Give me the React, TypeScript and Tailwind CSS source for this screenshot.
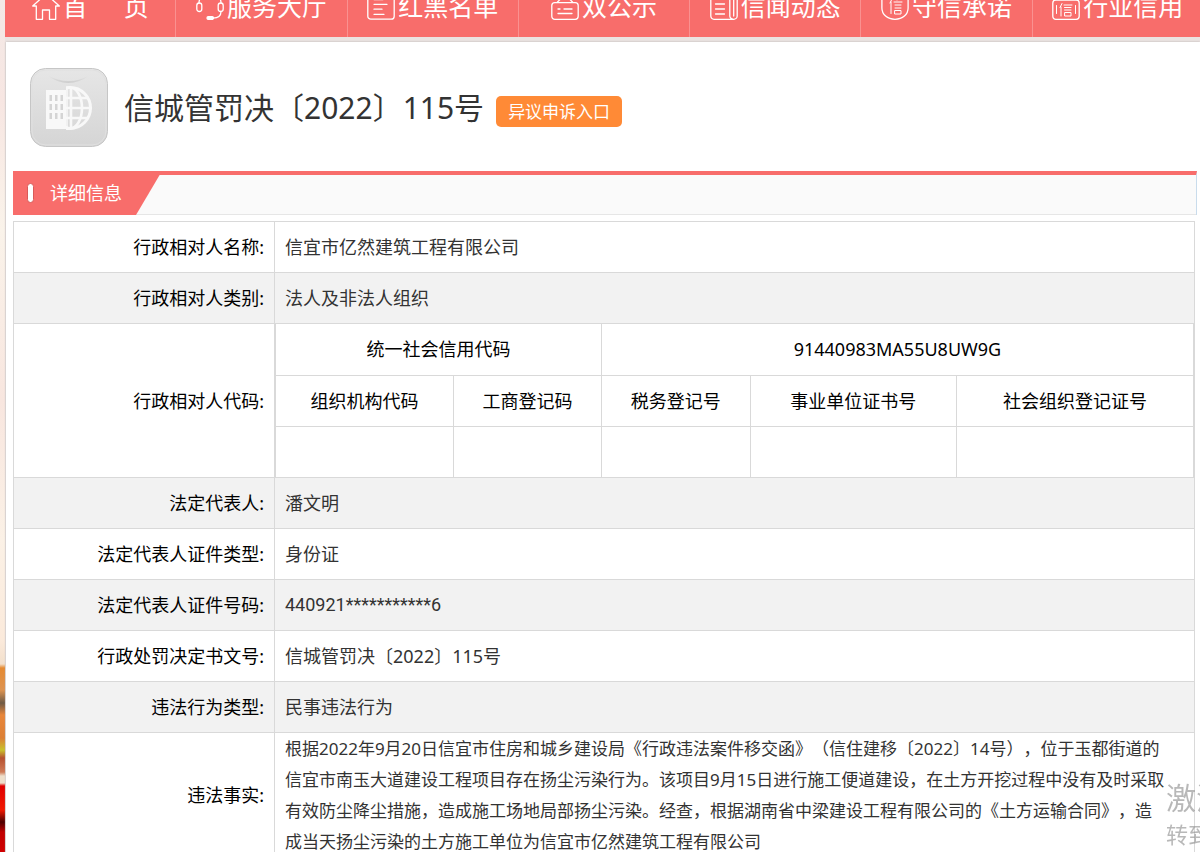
import React from 'react';

interface NavEntry {
  label: string[];
  icon: React.ReactNode;
}

interface DetailRow {
  label: string;
  value: string;
  masked?: boolean;
}

const NavIcon: React.FC<{ children: React.ReactNode }> = ({ children }) => (
  <svg
    className="w-7 h-7 shrink-0"
    viewBox="0 0 28 28"
    fill="none"
    stroke="currentColor"
    strokeWidth="1.3"
    strokeLinecap="round"
    strokeLinejoin="round"
    aria-hidden="true"
  >
    {children}
  </svg>
);

const HomeIcon = () => (
  <NavIcon>
    <path d="M.7 14 14 2l13.3 12h-3.6v13.3h-6.2V18h-7v9.3H4.3V14z" />
  </NavIcon>
);

const HeadsetIcon = () => (
  <NavIcon>
    <path d="M3 11C3 5 8 1 14 1s11 4 11 10" />
    <rect x=".8" y="11" width="5" height="8.5" rx="2.5" />
    <rect x="22.2" y="11" width="5" height="8.5" rx="2.5" />
    <path d="M25 19.5c0 4-3 6.500-8 6.700" />
    <rect x="11" y="24.6" width="6.5" height="2.8" rx="1.4" fill="currentColor" />
  </NavIcon>
);

const ListIcon = () => (
  <NavIcon>
    <rect x=".8" y="2" width="26.4" height="25.2" rx="3" />
    <path d="M7 7.5h9M7 12.3h13M7 17.2h8M7 22.3h10" />
  </NavIcon>
);

const BoardIcon = () => (
  <NavIcon>
    <rect x=".8" y="10.6" width="26.4" height="16.7" rx="3" />
    <path d="m6.500 10 3-3h9l3 3M10 7a4 4 0 0 1 8 0M7 17h2M13 17h8M7 21.500h14" />
  </NavIcon>
);

const NewsIcon = () => (
  <NavIcon>
    <path d="M24 27.300H4a3.200 3.200 0 0 1-3.200-3.200V2h19v22a3.700 3.300 0 0 0 7.400 0V5h-3.500v19" />
    <path d="M5.500 7h9M5.500 12h9M5.500 17h9M5.500 22h9" />
  </NavIcon>
);

const ShieldIcon = () => (
  <NavIcon>
    <path d="M14 1 .9 4v12c0 6.500 5.500 11.300 13.100 11.300S27.100 22.500 27.100 16V4z" />
    <path d="M11.500 6 9 11M10 10v11.500M16 7v1M13 10h8M14 13h6M14 16h6M14 18.500h6v3.500h-6z" strokeWidth="1" />
  </NavIcon>
);

const BadgeIcon = () => (
  <NavIcon>
    <rect x=".8" y="8" width="26.400" height="19.300" rx="3" />
    <path d="M4.500 13.500v8M23.500 13.500v8M10 11.500l-2 4M9 15v9M12 13h8M12.500 15.500h6.500M12.500 18h6.500M13 20.500h6V24h-6z" strokeWidth="1" />
  </NavIcon>
);

const navEntries: NavEntry[] = [
  { label: ['首', '页'], icon: <HomeIcon /> },
  { label: ['服务大厅'], icon: <HeadsetIcon /> },
  { label: ['红黑名单'], icon: <ListIcon /> },
  { label: ['双公示'], icon: <BoardIcon /> },
  { label: ['信闻动态'], icon: <NewsIcon /> },
  { label: ['守信承诺'], icon: <ShieldIcon /> },
  { label: ['行业信用'], icon: <BadgeIcon /> },
];

const subjectRows: DetailRow[] = [
  { label: '行政相对人名称:', value: '信宜市亿然建筑工程有限公司' },
  { label: '行政相对人类别:', value: '法人及非法人组织' },
];

const caseRows: DetailRow[] = [
  { label: '法定代表人:', value: '潘文明' },
  { label: '法定代表人证件类型:', value: '身份证' },
  { label: '法定代表人证件号码:', value: '440921***********6', masked: true },
  { label: '行政处罚决定书文号:', value: '信城管罚决〔2022〕115号' },
  { label: '违法行为类型:', value: '民事违法行为' },
];

const factLines = [
  '根据2022年9月20日信宜市住房和城乡建设局《行政违法案件移交函》（信住建移〔2022〕14号），位于玉都街道的',
  '信宜市南玉大道建设工程项目存在扬尘污染行为。该项目9月15日进行施工便道建设，在土方开挖过程中没有及时采取',
  '有效防尘降尘措施，造成施工场地局部扬尘污染。经查，根据湖南省中梁建设工程有限公司的《土方运输合同》，造',
  '成当天扬尘污染的土方施工单位为信宜市亿然建筑工程有限公司',
];

// The bar is scrolled partly out of view, so it starts above the window.
const TopNav = () => (
  <nav className="grid grid-cols-7 h-16 -mt-[27px] -mr-1 bg-[#f86d6b] text-white">
    {navEntries.map(entry => (
      <a
        key={entry.label.join('')}
        href="#"
        className="flex items-center justify-center gap-[3px] border-r border-[#fa9190] pt-[19px] pb-[17px] text-[25px] leading-7 whitespace-nowrap"
      >
        {entry.icon}
        <span className="flex gap-9">
          {entry.label.map(part => (
            <span key={part}>{part}</span>
          ))}
        </span>
      </a>
    ))}
  </nav>
);

const CompanyIcon = () => (
  <svg className="w-[78px] h-[79px] shrink-0" viewBox="0 0 78 79" fill="none" aria-hidden="true">
    <defs>
      <linearGradient id="tile" x1="0" y1="0" x2="0" y2="1">
        <stop offset="0" stopColor="#e6e6e6" />
        <stop offset="1" stopColor="#d5d5d5" />
      </linearGradient>
      <linearGradient id="fold" x1="0" y1="0" x2="0" y2="1">
        <stop offset="0" stopColor="#e6e6e6" />
        <stop offset="1" stopColor="#cdcdcd" />
      </linearGradient>
      <clipPath id="half">
        <rect x="36" y="16" width="28" height="48" />
      </clipPath>
    </defs>
    <rect x=".5" y=".5" width="77" height="78" rx="15" fill="url(#tile)" stroke="#c6c6c6" />
    <rect x="2" y="2" width="74" height="75" rx="14" stroke="#e0e0e0" />
    <path d="M17 7q21 16 43 0-21 12-43 0z" fill="url(#fold)" />
    <path d="M16 22h20v39H16z" fill="#f8f8f8" />
    <path
      d="M19.500 27h2.500v6h-2.500zM25 27h2.500v6H25zM30.500 27H33v6h-2.500zM19.500 36h2.500v6h-2.500zM25 36h2.500v6H25zM30.500 36H33v6h-2.500zM19.500 45h2.500v6h-2.500zM25 45h2.500v6H25zM30.500 45H33v6h-2.500z"
      fill="#d4d4d4"
    />
    <g clipPath="url(#half)" stroke="#f8f8f8" strokeWidth="2.600">
      <circle cx="40" cy="40" r="20.500" strokeWidth="3" />
      <ellipse cx="40" cy="40" rx="12" ry="20.500" />
      <path d="M41 20v41M36 30h22M36 40h26M36 50h22" />
      <path d="M37 19v43" strokeWidth="1.500" />
    </g>
  </svg>
);

const SectionHeader = () => (
  <div className="h-11 border-t-4 border-[#f86d6b] bg-[#fafafa] border-r border-r-[#c9dcec]">
    <div className="flex h-10 border-b border-[#e6e6e6]">
      <h2 className="-mt-1 flex h-11 w-[150px] shrink-0 items-center bg-[#f86d6b] pl-[14px] text-lg text-white [clip-path:polygon(0_0,149px_0,123px_100%,0_100%)]">
        <span className="mr-4 h-5 w-[7px] rounded-full border border-[#d95a58] bg-white" />
        详细信息
      </h2>
    </div>
  </div>
);

const cellBorder = 'border border-[#d9d9d9]';

const InfoRow: React.FC<{ row: DetailRow; shaded: boolean }> = ({ row, shaded }) => (
  <tr className={shaded ? 'h-[51px] bg-[#f2f2f2]' : 'h-[51px]'}>
    <th className={`${cellBorder} pr-[10px] text-right font-normal text-black`}>{row.label}</th>
    <td className={`${cellBorder} px-[10px] ${row.masked ? 'font-[Roboto,sans-serif]' : ''}`}>{row.value}</td>
  </tr>
);

const CodeTable = () => (
  <table className="w-full table-fixed border-collapse border-x border-[#d9d9d9] text-center text-black">
    <colgroup>
      <col className="w-[19.4%]" />
      <col className="w-[16.1%]" />
      <col className="w-[16.2%]" />
      <col className="w-[22.5%]" />
      <col />
    </colgroup>
    <tbody>
      <tr className="h-[51px]">
        <th colSpan={2} className="border-r border-[#d9d9d9] font-normal">统一社会信用代码</th>
        <td colSpan={3}>91440983MA55U8UW9G</td>
      </tr>
      <tr className="h-[51px]">
        {['组织机构代码', '工商登记码', '税务登记号', '事业单位证书号', '社会组织登记证号'].map(name => (
          <th key={name} className={`${cellBorder} font-normal`}>{name}</th>
        ))}
      </tr>
      <tr className="h-[51px]">
        {[0, 1, 2, 3, 4].map(i => (
          <td key={i} className="border-x border-[#d9d9d9]" />
        ))}
      </tr>
    </tbody>
  </table>
);

export default function App() {
  return (
    <div className="flex min-h-screen overflow-hidden bg-[#ebe3e1] text-[#333] font-['Noto_Sans','Noto_Sans_CJK_SC',sans-serif] [text-spacing-trim:space-all]">
      {/* sliver of the festive page background */}
      <div className="w-[5px] shrink-0 bg-[linear-gradient(180deg,#f3e9e6_0px,#f7e6e2_100px,#faf3ea_230px,#f8e6df_400px,#fbf1e6_540px,#fbeadb_640px,#f3e0cc_664px,#e58a32_668px,#dd9350_690px,#6f5a45_703px,#e8863a_715px,#dc7f35_738px,#c9c22c_750px,#b6502f_758px,#cf7a56_772px,#eedfcb_776px,#eedfcb_783px,#e00000_786px,#f01800_810px,#4d0000_822px,#c00000_832px,#d00000_852px)]" />

      <div className="min-w-0 flex-1">
        <TopNav />

        <main className="mt-[5px] ml-px bg-white shadow-[0_0_2px_#b8b0b0]">
          <header className="flex items-center pt-[26px] pl-6">
            <CompanyIcon />
            <h1 className="ml-4 text-[30px] leading-10 whitespace-nowrap">信城管罚决〔2022〕115号</h1>
            <button
              type="button"
              className="ml-3 mt-2 h-[31px] rounded-[5px] bg-[#ff8a36] px-3 text-[17px] leading-[31px] whitespace-nowrap text-white"
            >
              异议申诉入口
            </button>
          </header>

          <section className="mt-6 pl-[7px] pr-[3px]">
            <SectionHeader />

            <table className="mt-[6px] w-[calc(100%-2px)] table-fixed border-collapse text-lg leading-7">
              <colgroup>
                <col className="w-[261px]" />
                <col />
              </colgroup>
              <tbody>
                {subjectRows.map((row, i) => (
                  <InfoRow key={row.label} row={row} shaded={i % 2 === 1} />
                ))}
                <tr>
                  <th className={`${cellBorder} pr-[10px] text-right font-normal text-black`}>行政相对人代码:</th>
                  <td className={`${cellBorder} p-0`}>
                    <CodeTable />
                  </td>
                </tr>
                {caseRows.map((row, i) => (
                  <InfoRow key={row.label} row={row} shaded={i % 2 === 0} />
                ))}
                <tr>
                  <th className={`${cellBorder} pr-[10px] text-right font-normal text-black`}>违法事实:</th>
                  <td className={`${cellBorder} pl-[10px] text-[17px] leading-[31px]`}>
                    {factLines.map(line => (
                      <span key={line} className="block whitespace-nowrap">{line}</span>
                    ))}
                  </td>
                </tr>
              </tbody>
            </table>
          </section>
        </main>
      </div>

      {/* system watermark running off the right edge */}
      <div className="fixed right-0 bottom-0 w-[34px] overflow-hidden whitespace-nowrap text-[#888]/60 pointer-events-none">
        <p className="text-[30px] leading-9">激活</p>
        <p className="text-[22px] leading-9">转到</p>
      </div>
    </div>
  );
}
